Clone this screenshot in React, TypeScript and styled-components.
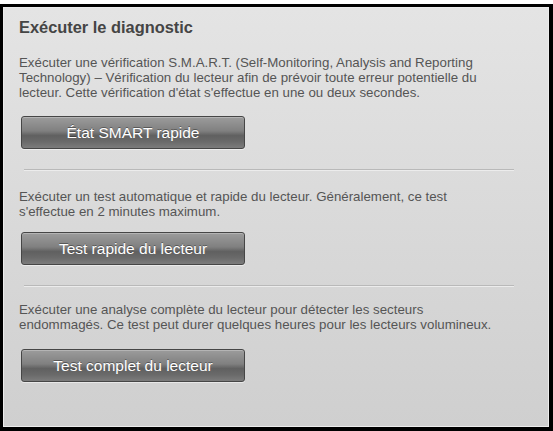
import React from "react";
import styled, { createGlobalStyle } from "styled-components";

const Global = createGlobalStyle`
  html, body { margin: 0; padding: 0; background: #ffffff; }
  body { font-family: "Liberation Sans", Arial, sans-serif; }
`;

const Frame = styled.div`
  margin-top: 4px;
  width: 553px;
  height: 427px;
  box-sizing: border-box;
  border-top: 3px solid #000;
  border-left: 3px solid #000;
  border-right: 4px solid #000;
  border-bottom: 4px solid #000;
`;

const Panel = styled.div`
  height: 100%;
  box-sizing: border-box;
  border: 1px solid #ececec;
  background: linear-gradient(#e4e4e4, #cfcfcf);
  padding: 10px 0 0 15px;
  display: flex;
  flex-direction: column;
`;

const Title = styled.h1`
  margin: 0;
  font-size: 16.4px;
  line-height: 18px;
  font-weight: bold;
  color: #454545;
`;

const Section = styled.section<{ $top: number }>`
  margin-top: ${(p) => p.$top}px;
  display: flex;
  flex-direction: column;
  align-items: flex-start;
`;

const Text = styled.p`
  margin: 0;
  width: 515px;
  font-size: 13.3px;
  line-height: 15px;
  color: #555555;
`;

const Button = styled.button<{ $gap: number }>`
  margin-top: ${(p) => p.$gap}px;
  margin-left: 2px;
  width: 224px;
  height: 33px;
  border: 1px solid #464646;
  border-radius: 3px;
  background: linear-gradient(#9c9c9c 0%, #808080 45%, #606060 60%, #6a6a6a 80%, #7c7c7c 100%);
  box-shadow: inset 0 1px 0 rgba(255, 255, 255, 0.25), 0 1px 0 rgba(255, 255, 255, 0.5);
  color: #ffffff;
  font-family: "Liberation Sans", Arial, sans-serif;
  font-size: 15.5px;
  text-shadow: 0 -1px 0 rgba(0, 0, 0, 0.35);
  padding: 0;
  cursor: pointer;
`;

const Divider = styled.hr`
  margin: 20px 0 0 5px;
  width: 490px;
  height: 0;
  border: none;
  border-top: 1px solid #b9b9b9;
  border-bottom: 1px solid #ececec;
`;

export default function App() {
  return (
    <>
      <Global />
      <Frame>
        <Panel>
          <Title>Exécuter le diagnostic</Title>
          <Section $top={19}>
            <Text>
              Exécuter une vérification S.M.A.R.T. (Self-Monitoring, Analysis and Reporting
              <br />
              Technology) – Vérification du lecteur afin de prévoir toute erreur potentielle du
              <br />
              lecteur. Cette vérification d'état s'effectue en une ou deux secondes.
            </Text>
            <Button $gap={16}>État SMART rapide</Button>
          </Section>
          <Divider />
          <Section $top={18}>
            <Text>
              Exécuter un test automatique et rapide du lecteur. Généralement, ce test
              <br />
              s'effectue en 2 minutes maximum.
            </Text>
            <Button $gap={13}>Test rapide du lecteur</Button>
          </Section>
          <Divider />
          <Section $top={15}>
            <Text>
              Exécuter une analyse complète du lecteur pour détecter les secteurs
              <br />
              endommagés. Ce test peut durer quelques heures pour les lecteurs volumineux.
            </Text>
            <Button $gap={17}>Test complet du lecteur</Button>
          </Section>
        </Panel>
      </Frame>
    </>
  );
}
